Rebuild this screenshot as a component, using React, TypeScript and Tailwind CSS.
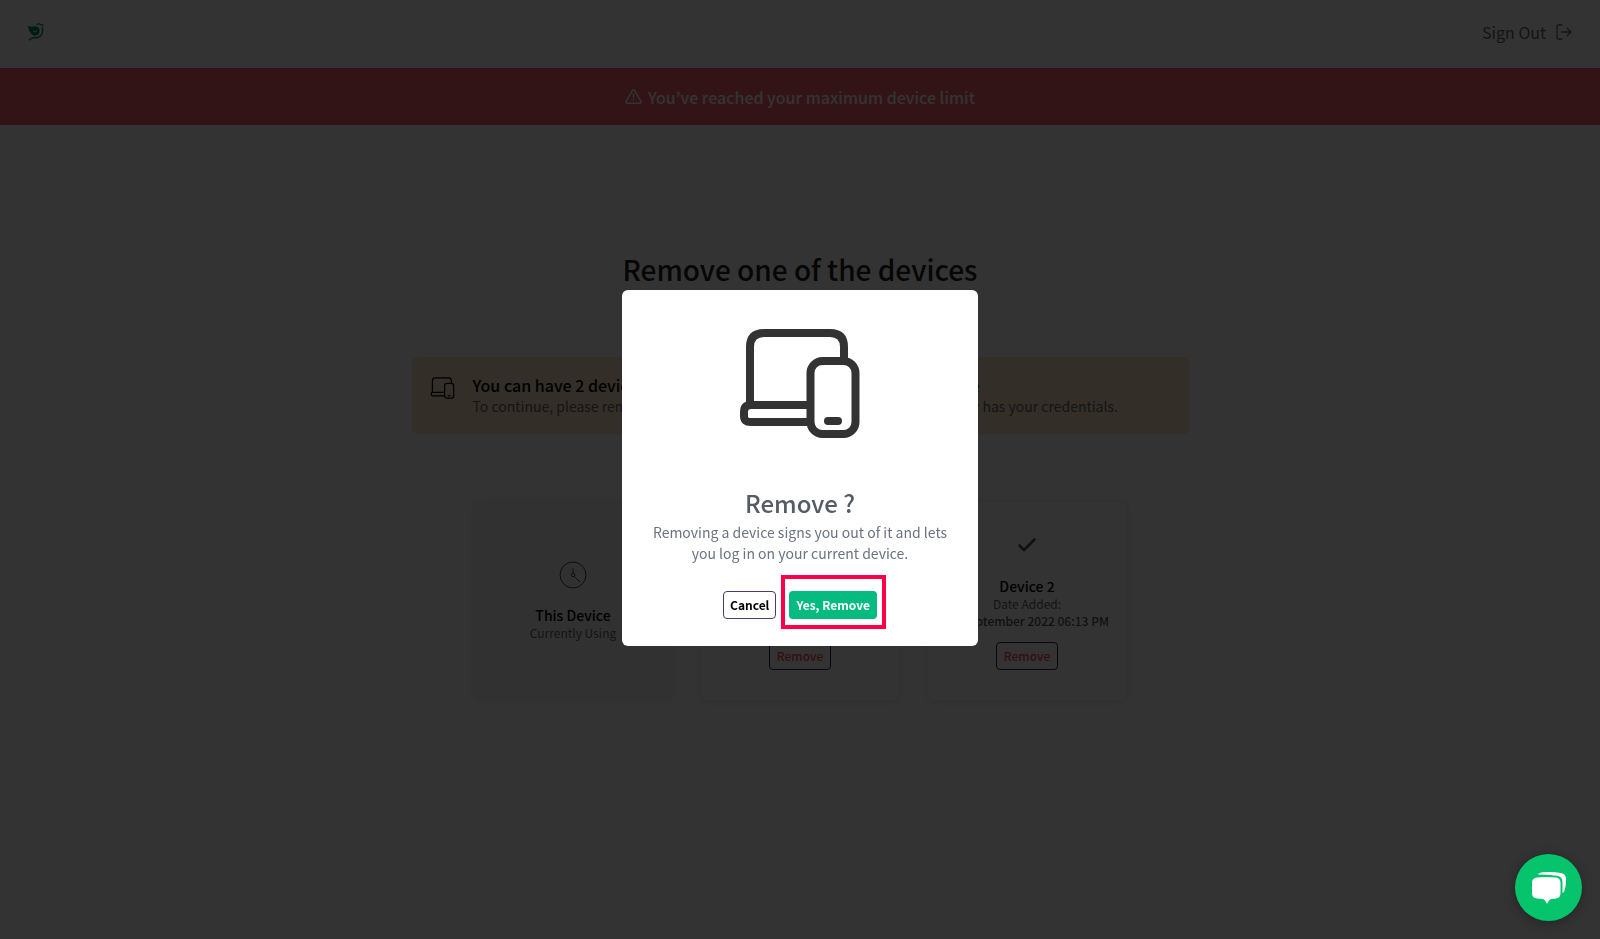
import React from "react";

const fontStack = "font-['Noto_Sans_CJK_KR','Noto_Sans',sans-serif]";

function DevicesIcon({ className, thin = false }: { className?: string; thin?: boolean }) {
  const w = thin ? 6 : 8;
  return (
    <svg viewBox="0 0 120 109" fill="none" stroke="currentColor" strokeWidth={w} className={className} aria-hidden="true">
      <path d="M10 76V18Q10 4 24 4H90Q104 4 104 18V30" />
      <path d="M70 76H11Q4 76 4 83V87Q4 93 11 93H70" />
      <rect x="70.500" y="32" width="45" height="73" rx="12" />
      <path d="M88 92H98" strokeLinecap="round" />
    </svg>
  );
}

function BirdLogo() {
  return (
    <svg viewBox="0 0 48 54" className="h-[18px] w-4 text-[#00915a]" fill="none" aria-hidden="true">
      <path
        d="M0 8Q12 13 22 9Q35 12 35 24Q34 38 21 38Q10 37 7 28Q2 24 3 20Q0 14 0 8Z"
        fill="currentColor"
      />
      <path d="M15 23Q20 31 27 23" stroke="#fff" strokeWidth="3" />
      <path d="M26 5Q33 0 39 5L47 7" stroke="currentColor" strokeWidth="4" />
      <path d="M42 12Q48 30 36 40Q28 46 16 44Q8 45 3 52" stroke="currentColor" strokeWidth="4.500" />
    </svg>
  );
}

function SignOutIcon() {
  return (
    <svg viewBox="0 0 16 16" className="size-4" fill="none" stroke="currentColor" strokeWidth="1.300" strokeLinecap="round" strokeLinejoin="round" aria-hidden="true">
      <path d="M6 1H2.500Q1 1 1 2.500V13.500Q1 15 2.500 15H6" />
      <path d="M5.500 8H15M11 4L15 8L11 12" />
    </svg>
  );
}

function WarningIcon() {
  return (
    <svg viewBox="0 0 17 15" className="h-[15px] w-[17px]" fill="none" stroke="currentColor" strokeWidth="1.500" strokeLinecap="round" strokeLinejoin="round" aria-hidden="true">
      <path d="M7.300 1.500Q8.500 .2 9.700 1.500L16 12.500Q16.300 14.200 14.800 14.200H2.200Q.7 14.200 1 12.500Z" />
      <path d="M8.500 5V8.500M8.500 11V11.200" />
    </svg>
  );
}

function ClockIcon() {
  return (
    <svg viewBox="0 0 28 28" className="size-7 text-[#444]" fill="none" stroke="currentColor" aria-hidden="true">
      <circle cx="14" cy="14" r="13" />
      <circle cx="14" cy="14" r="1.800" />
      <path d="M14 12V7.500M15.500 15.500L21 21" />
    </svg>
  );
}

function CheckIcon() {
  return (
    <svg viewBox="0 0 18 14" className="h-3.5 w-[18px] text-[#555]" fill="none" stroke="currentColor" strokeWidth="2.600" strokeLinecap="round" strokeLinejoin="round" aria-hidden="true">
      <path d="M1.500 7.500L6 12L16.500 1.500" />
    </svg>
  );
}

function ChatIcon() {
  return (
    <svg viewBox="0 0 36 34" className="h-[34px] w-9" fill="currentColor" aria-hidden="true">
      <path d="M6 6.500Q15.500 5.300 25 6.500Q29.500 7 29.500 12V22Q29.500 27 25 27.500L20 28Q17.500 29 16 33Q14.500 29 12 28L6 27.500Q1 27 1 22V12Q1 7 6 6.500Z" />
      <path d="M7 3.500Q8 1.500 12 1.300Q21 .5 30 2Q35 2.800 35 8Q35 16 33.300 20Q33 21.500 31.500 22V11.500Q31.500 5.500 26 4.700Q16 3.500 7 3.500Z" />
    </svg>
  );
}

function DeviceCard({ name, date }: { name: string; date: string }) {
  return (
    <article className="flex h-[198px] w-[198px] flex-col items-center rounded-md bg-white pt-9 shadow-[0_0_10px_rgba(0,0,0,0.14)]">
      <CheckIcon />
      <h2 className="mt-6 text-sm leading-5 font-medium text-black">{name}</h2>
      <p className="text-xs leading-4 text-[#666]">Date Added:</p>
      <p className="text-xs leading-[17px] font-medium whitespace-nowrap text-[#555]">{date}</p>
      <button type="button" className="mt-[13px] h-7 rounded border border-[#2a2450] px-[7px] text-xs font-medium text-[#ff4d58]">
        Remove
      </button>
    </article>
  );
}

export default function App() {
  return (
    <div className={`min-h-screen bg-white ${fontStack}`}>
      <header className="flex h-[68px] items-center justify-between px-7 pb-1">
        <a href="#home" aria-label="Home">
          <BirdLogo />
        </a>
        <a href="#sign-out" className="flex items-center gap-2.5 text-base text-[#666]">
          Sign Out
          <SignOutIcon />
        </a>
      </header>

      <div role="alert" className="flex h-[57px] items-center justify-center gap-1.5 bg-[#ff646e] text-base font-medium text-white">
        <WarningIcon />
        You’ve reached your maximum device limit
      </div>

      <main className="flex flex-col items-center px-4 pt-[126px]">
        <h1 className="text-[28px] leading-9 font-medium text-[#222]">Remove one of the devices</h1>

        <section className="mt-[70px] flex h-[77px] w-full max-w-[777px] gap-[18px] rounded-md bg-[#ffe6c3] px-[18px] pt-[17px]">
          <DevicesIcon thin className="mt-[3px] h-[22px] w-[25px] shrink-0 text-black" />
          <div className="whitespace-nowrap">
            <h2 className="flex w-[507px] justify-between text-base leading-[22px] font-medium text-black">
              You can have 2 devices logged in to your account.
              <a href="#upgrade" className="text-[#0050ff]">
                Upgrade
              </a>
            </h2>
            <p className="text-sm leading-5 text-[#666]">
              To continue, please remove a device first or renew your password if somebody has your credentials.
            </p>
          </div>
        </section>

        <section aria-label="Devices" className="mt-[68px] flex gap-[29px]">
          <article className="flex h-[198px] w-[198px] flex-col items-center rounded-md bg-[#f5f5f5] pt-[59px] shadow-[0_0_10px_rgba(0,0,0,0.10)]">
            <ClockIcon />
            <h2 className="mt-4 text-sm leading-5 font-medium text-black">This Device</h2>
            <p className="text-xs leading-4 text-[#666]">Currently Using</p>
          </article>
          <DeviceCard name="Device 1" date="22 September 2022 06:10 PM" />
          <DeviceCard name="Device 2" date="22 September 2022 06:13 PM" />
        </section>
      </main>

      <div className="fixed inset-0 flex items-center justify-center bg-black/80 pb-1">
        <div role="dialog" aria-modal="true" aria-labelledby="dialog-title" className="flex h-[356px] w-[356px] flex-col items-center rounded-md bg-white pt-[39px] text-center">
          <DevicesIcon className="h-[109px] w-[120px] shrink-0 text-[#333]" />
          <h2 id="dialog-title" className="mt-[49px] text-2xl leading-8 font-medium text-[#555c66]">
            Remove ?
          </h2>
          <p className="mt-[3px] px-6 text-sm leading-[21px] text-[#6b7280]">
            Removing a device signs you out of it and lets you log in on your current device.
          </p>
          <div className="mt-[27px] flex gap-[13px]">
            <button type="button" className="h-7 rounded border border-[#4b3a70] px-1.5 text-xs font-bold text-black">
              Cancel
            </button>
            <div className="relative">
              <button type="button" className="h-7 rounded-sm bg-[#05bb80] px-[7px] text-xs font-bold text-white">
                Yes, Remove
              </button>
              <span className="pointer-events-none absolute -top-4 -right-[9px] -bottom-2.5 -left-2 border-4 border-[#ff0048]" />
            </div>
          </div>
        </div>
      </div>

      <button type="button" aria-label="Open chat" className="fixed right-[18px] bottom-[18px] flex size-[67px] items-center justify-center rounded-full bg-[#05c46b] text-white shadow-[0_2px_12px_rgba(0,0,0,0.3)]">
        <ChatIcon />
      </button>
    </div>
  );
}
